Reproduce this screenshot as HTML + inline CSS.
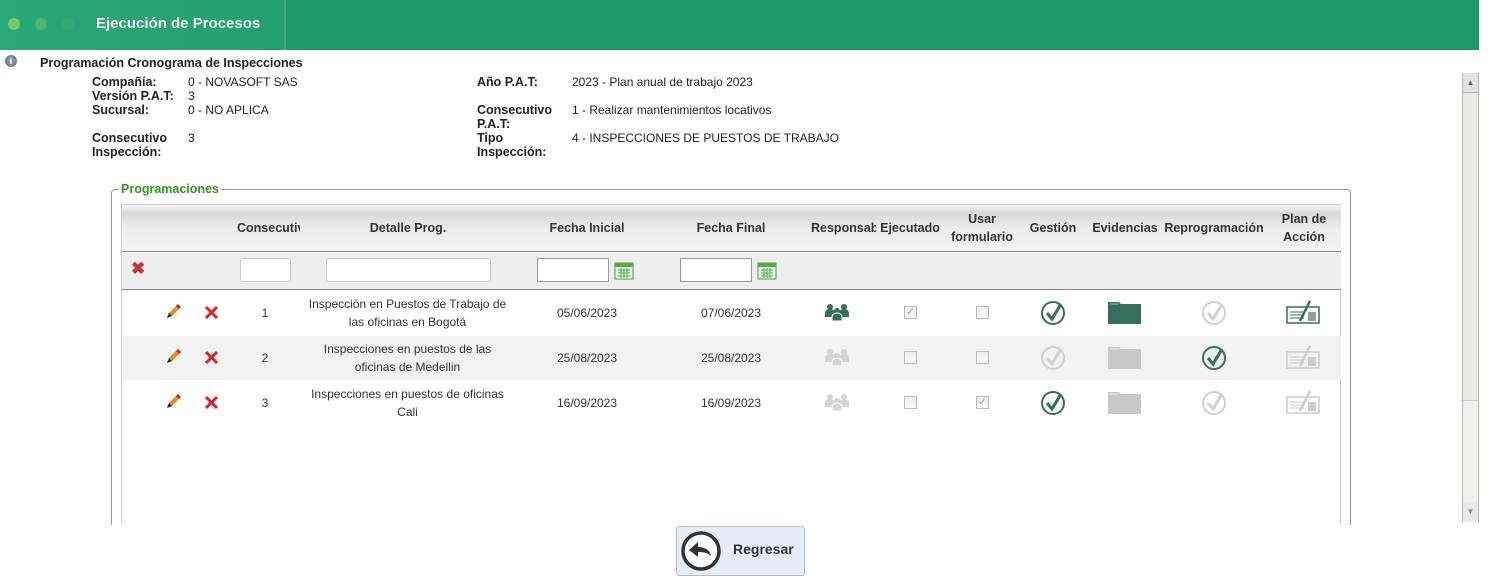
<!DOCTYPE html>
<html><head><meta charset="utf-8"><style>
*{margin:0;padding:0;box-sizing:border-box}
body{width:1488px;height:582px;background:#fff;font-family:"Liberation Sans",sans-serif;font-size:12px;color:#222;position:relative;overflow:hidden}
.a{position:absolute}
.hdr{left:0;top:0;width:1479px;height:50px;background:linear-gradient(90deg,#2aa877 0,#22a070 284px,#1e9a6a 286px,#1e9a6a)}
.dot{width:12px;height:12px;border-radius:50%;top:18px}
.lbl{font-weight:bold;font-size:12.5px;line-height:14px}
.v{font-size:12px;line-height:14px}
.th{font-weight:bold;font-size:12.5px;text-align:center;line-height:18px;color:#333}
.td{font-size:12px;text-align:center;line-height:18px;color:#333}
.inp{background:#fff;border:1px solid #ccc;border-radius:3px;height:24px}
.cb{width:13px;height:13px;border:1px solid #bbb;background:linear-gradient(#eee,#fafafa)}
</style></head><body>
<div class="a hdr"></div>
<div class="a" style="left:284px;top:0;width:2px;height:50px;background:#3cae82"></div>
<div class="a dot" style="left:8px;background:#7bc86a"></div>
<div class="a dot" style="left:35px;background:#4db670"></div>
<div class="a dot" style="left:62px;background:#33a872"></div>
<div class="a" style="left:96px;top:15px;color:#f2f8f2;font-weight:bold;font-size:15px">Ejecución de Procesos</div>

<div class="a" style="left:5px;top:55px;width:12px;height:12px;border-radius:50%;background:radial-gradient(#9ab,#567);color:#fff;font-size:9px;text-align:center;line-height:12px;font-weight:bold">i</div>
<div class="a lbl" style="left:40px;top:56px">Programación Cronograma de Inspecciones</div>
<div class="a lbl" style="left:92px;top:75px">Compañía:<br>Versión P.A.T:<br>Sucursal:</div>
<div class="a v" style="left:188px;top:75px">0 - NOVASOFT SAS<br>3<br>0 - NO APLICA</div>
<div class="a lbl" style="left:92px;top:131px">Consecutivo<br>Inspección:</div>
<div class="a v" style="left:188px;top:131px">3</div>
<div class="a lbl" style="left:477px;top:75px">Año P.A.T:</div>
<div class="a v" style="left:572px;top:75px">2023 - Plan anual de trabajo 2023</div>
<div class="a lbl" style="left:477px;top:103px">Consecutivo<br>P.A.T:<br>Tipo<br>Inspección:</div>
<div class="a v" style="left:572px;top:103px">1 - Realizar mantenimientos locativos</div>
<div class="a v" style="left:572px;top:131px">4 - INSPECCIONES DE PUESTOS DE TRABAJO</div>

<div class="a" style="left:1462px;top:73px;width:17px;height:449px;background:#f0f0f0;border-left:1px solid #a9c19a;border-right:1px solid #a9c19a"></div>
<div class="a" style="left:1463px;top:73px;width:15px;height:20px;background:#e2e2e2;border-bottom:1px solid #a9c19a;color:#666;font-size:8px;text-align:center;line-height:20px">▲</div>
<div class="a" style="left:1463px;top:93px;width:15px;height:308px;background:#eaeaea;border-bottom:1px solid #ccc"></div>
<div class="a" style="left:1463px;top:502px;width:15px;height:20px;background:#e8e8e8;color:#888;font-size:8px;text-align:center;line-height:20px">▼</div>

<div class="a" style="left:111px;top:189px;width:1240px;height:345px;border:1px solid #999;border-radius:4px"></div>
<div class="a" style="left:119px;top:182px;background:#fff;padding:0 2px;color:#2d9b1e;font-weight:bold;font-size:12.5px">Programaciones</div>
<div class="a" style="left:121px;top:204px;width:1220px;height:330px;border:1px solid #ccc;background:#fff"></div>
<div class="a" style="left:122px;top:205px;width:1219px;height:47px;background:linear-gradient(#f6f6f6,#d8d8d8 8px,#eee 25px,#f2f2f2);border-bottom:1px solid #888"></div>
<div class="a" style="left:122px;top:253px;width:1219px;height:37px;background:#eee;border-bottom:1px solid #888"></div>
<div class="a" style="left:122px;top:336px;width:1219px;height:44px;background:#f2f2f2"></div>

<div class="a th" style="left:230px;top:219px;width:70px;overflow:hidden;white-space:nowrap;text-align:left;padding-left:7px">Consecutivo</div>
<div class="a th" style="left:328px;top:219px;width:160px">Detalle Prog.</div>
<div class="a th" style="left:527px;top:219px;width:120px">Fecha Inicial</div>
<div class="a th" style="left:671px;top:219px;width:120px">Fecha Final</div>
<div class="a th" style="left:808px;top:219px;width:68px;overflow:hidden;white-space:nowrap;text-align:left;padding-left:3px">Responsable</div>
<div class="a th" style="left:875px;top:219px;width:70px">Ejecutado</div>
<div class="a th" style="left:947px;top:210px;width:70px">Usar<br>formulario</div>
<div class="a th" style="left:1018px;top:219px;width:70px">Gestión</div>
<div class="a th" style="left:1090px;top:219px;width:70px">Evidencias</div>
<div class="a th" style="left:1164px;top:219px;width:100px">Reprogramación</div>
<div class="a th" style="left:1269px;top:210px;width:70px">Plan de<br>Acción</div>

<div class="a" style="left:131px;top:260px;color:#c33;font-size:17px;font-weight:bold;line-height:18px">✖</div>
<div class="a inp" style="left:240px;top:258px;width:51px"></div>
<div class="a inp" style="left:326px;top:258px;width:165px"></div>
<div class="a" style="left:537px;top:258px;width:72px;height:24px;border:1px solid #999;background:#fff"></div>
<div class="a" style="left:680px;top:258px;width:72px;height:24px;border:1px solid #999;background:#fff"></div>
<svg class="a" style="left:614px;top:262px" width="20" height="18"><rect x="1" y="1" width="18" height="16" fill="#dfe" stroke="#4a9a3a"/><rect x="1" y="1" width="18" height="4" fill="#5aa84a"/><path d="M4 8h12M4 11h12M4 14h12M7 6v10M10 6v10M13 6v10" stroke="#5aa84a"/></svg>
<svg class="a" style="left:757px;top:262px" width="20" height="18"><rect x="1" y="1" width="18" height="16" fill="#dfe" stroke="#4a9a3a"/><rect x="1" y="1" width="18" height="4" fill="#5aa84a"/><path d="M4 8h12M4 11h12M4 14h12M7 6v10M10 6v10M13 6v10" stroke="#5aa84a"/></svg>

<div class="a td" style="left:290px;top:295px;width:235px">Inspección en Puestos de Trabajo de<br>las oficinas en Bogotá</div>
<div class="a td" style="left:290px;top:340px;width:235px">Inspecciones en puestos de las<br>oficinas de Medellin</div>
<div class="a td" style="left:290px;top:385px;width:235px">Inspecciones en puestos de oficinas<br>Cali</div>

<div class="a td" style="left:250px;top:304px;width:30px">1</div>
<div class="a td" style="left:250px;top:349px;width:30px">2</div>
<div class="a td" style="left:250px;top:394px;width:30px">3</div>
<div class="a td" style="left:537px;top:304px;width:100px">05/06/2023</div>
<div class="a td" style="left:537px;top:349px;width:100px">25/08/2023</div>
<div class="a td" style="left:537px;top:394px;width:100px">16/09/2023</div>
<div class="a td" style="left:681px;top:304px;width:100px">07/06/2023</div>
<div class="a td" style="left:681px;top:349px;width:100px">25/08/2023</div>
<div class="a td" style="left:681px;top:394px;width:100px">16/09/2023</div>

<svg class="a" style="left:0;top:0" width="1488" height="582">
<defs>
<g id="pen"><path d="M2 14l2-5 8-8 3 3-8 8z" fill="#f08a1c"/><path d="M11 2l2-2 3 3-2 2z" fill="#c22"/><path d="M2 14l2-5 3 3z" fill="#222"/></g>
<g id="del"><path d="M1 1l11 11M12 1L1 12" stroke="#e02020" stroke-width="3"/></g>
<g id="ppl"><circle cx="5" cy="4" r="3"/><path d="M0 14v-4a5 4 0 0 1 10 0v4z"/><circle cx="19" cy="4" r="3"/><path d="M14 14v-4a5 4 0 0 1 10 0v4z"/><circle cx="12" cy="8" r="3"/><path d="M7 18v-4a5 4 0 0 1 10 0v4z" stroke="#fff" stroke-width="1"/></g>
<g id="chk"><circle cx="12" cy="12" r="11" fill="none" stroke-width="2"/><path d="M6 12l5 6 9-15" fill="none" stroke-width="3"/></g>
<g id="fld"><path d="M0 2h11l2 2h20v20H0z"/><path d="M2 4h9" stroke="#fff" stroke-opacity=".5"/></g>
<g id="plan"><rect x="1" y="7" width="32" height="16" fill="none" stroke-width="1.5"/><path d="M4 12h14M4 15h14M4 18h14" stroke-width="1"/><rect x="22" y="12" width="8" height="9" stroke="none"/><path d="M14 21l10-20" stroke-width="2.5"/></g>
</defs>
<use href="#pen" x="165" y="304"/><use href="#pen" x="165" y="349"/><use href="#pen" x="165" y="394"/>
<use href="#del" x="205" y="306"/><use href="#del" x="205" y="351"/><use href="#del" x="205" y="396"/>
<use href="#ppl" x="825" y="303" fill="#356f5e"/><use href="#ppl" x="825" y="348" fill="#d4d4d4"/><use href="#ppl" x="825" y="393" fill="#d4d4d4"/>
<use href="#chk" x="1041" y="301" stroke="#356f5e"/><use href="#chk" x="1041" y="346" stroke="#d0d0d0"/><use href="#chk" x="1041" y="391" stroke="#356f5e"/>
<use href="#chk" x="1202" y="301" stroke="#d0d0d0"/><use href="#chk" x="1202" y="346" stroke="#356f5e"/><use href="#chk" x="1202" y="391" stroke="#d0d0d0"/>
<use href="#fld" x="1108" y="300" fill="#356f5e"/><use href="#fld" x="1108" y="345" fill="#c8c8c8"/><use href="#fld" x="1108" y="390" fill="#c8c8c8"/>
<use href="#plan" x="1286" y="300" stroke="#356f5e" fill="#9a9a9a"/><use href="#plan" x="1286" y="345" stroke="#ccc" fill="#ccc"/><use href="#plan" x="1286" y="390" stroke="#ccc" fill="#ccc"/>
</svg>
<div class="a cb" style="left:904px;top:306px;color:#999;font-size:10px;line-height:11px;text-align:center">✓</div>
<div class="a cb" style="left:904px;top:351px"></div>
<div class="a cb" style="left:904px;top:396px"></div>
<div class="a cb" style="left:976px;top:306px"></div>
<div class="a cb" style="left:976px;top:351px"></div>
<div class="a cb" style="left:976px;top:396px;color:#999;font-size:10px;line-height:11px;text-align:center">✓</div>

<div class="a" style="left:0;top:523px;width:1488px;height:59px;background:#fff"></div>
<div class="a" style="left:111px;top:522px;width:1px;height:3px;background:#999"></div>
<div class="a" style="left:1350px;top:522px;width:1px;height:3px;background:#999"></div>
<div class="a" style="left:676px;top:526px;width:129px;height:50px;background:#e6ecf8;border:1px solid #b5bccb;border-radius:3px"></div>
<svg class="a" style="left:680px;top:530px" width="42" height="42"><circle cx="21" cy="21" r="18" fill="#fff" stroke="#333" stroke-width="3.5"/><path d="M9 20l9-8v5c7 0 12 3 13 9-3-3-7-4-13-4v5z" fill="#333"/></svg>
<div class="a" style="left:733px;top:541px;font-weight:bold;font-size:14px;color:#333">Regresar</div>
</body></html>
